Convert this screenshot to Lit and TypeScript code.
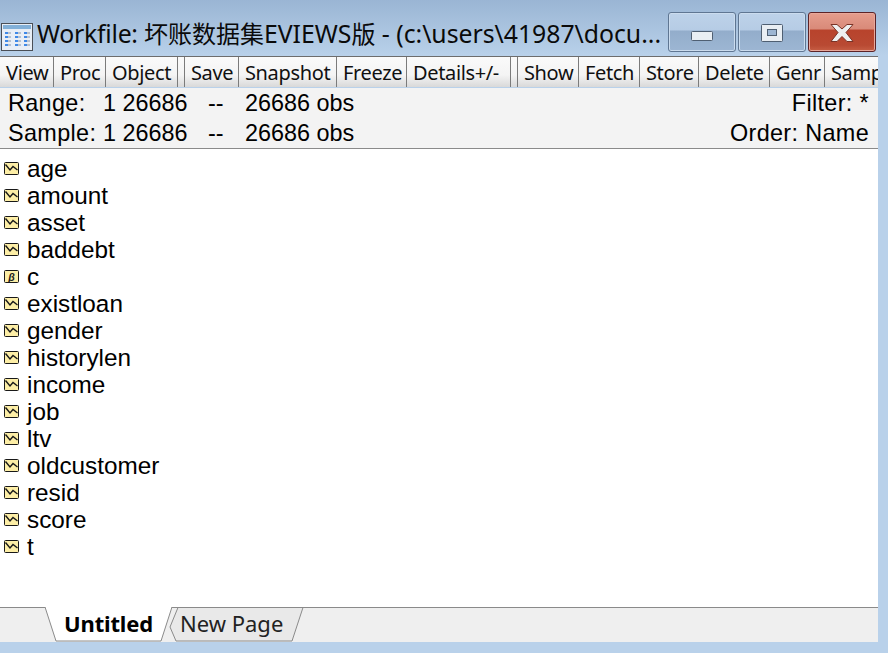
import { LitElement, html, css, svg } from "lit";
import { customElement } from "lit/decorators.js";

const TOOLS: (string | number)[][] = [
  ["View", 54], ["Proc", 52], ["Object", 72], ["", 7], ["Save", 54], ["Snapshot", 98], ["Freeze", 70],
  ["Details+/-", 104], ["", 7], ["Show", 61], ["Fetch", 61], ["Store", 59], ["Delete", 71], ["Genr", 55], ["Sample", 70],
];
const SERIES = ["age", "amount", "asset", "baddebt", "c", "existloan", "gender", "historylen", "income", "job", "ltv", "oldcustomer", "resid", "score", "t"];

@customElement("app-root")
export class AppRoot extends LitElement {
  static styles = css`
    :host { display: block; width: 888px; height: 653px; overflow: hidden; background: #b9d1ea; font-family: "Liberation Sans", Arial, sans-serif; color: #000; }
    .shell { height: 653px; display: flex; flex-direction: column; padding: 0 10px 11px 0; box-sizing: border-box; }
    .title { height: 56px; flex: none; margin-right: -10px; padding: 12px 12px 4px 1px; box-sizing: border-box; display: flex; align-items: flex-end; background: linear-gradient(#9ab5d4, #b9d1ea); }
    .app-icon { flex: none; width: 32px; height: 28px; margin-bottom: 1px; display: block; }
    .title-text { flex: 1; min-width: 0; margin-left: 4px; align-self: center; margin-top: 3px; font: 24.8px "Noto Sans", "Noto Sans CJK SC", sans-serif; letter-spacing: -0.02px; white-space: nowrap; line-height: 32px; color: #0a0a0a; }
    .lead { letter-spacing: -0.25px; }
    .cjk { font-size: 24px; letter-spacing: 0; }
    .controls { display: flex; gap: 2px; flex: none; }
    .ctl { width: 68px; height: 40px; box-sizing: border-box; border: 1px solid #5f7692; border-radius: 3px; box-shadow: inset 0 0 0 1px #cbdcee; background: linear-gradient(#bdd2e9 0, #b6cce5 45%, #93adcb 47%, #9db6d3 100%); display: flex; align-items: center; justify-content: center; }
    .ctl.close { border-color: #5c2327; box-shadow: inset 0 0 0 1px #e8a89b; background: linear-gradient(#e59d8d 0, #d98a79 42%, #b8432c 45%, #b94a33 85%, #c65f45 100%); }
    .ctl svg { display: block; margin-top: 2px; }
    .ctl .dash { margin-top: 7px; }
    .toolbar { flex: none; height: 31px; display: flex; overflow: hidden; border-top: 1px solid #6d6d6d; box-sizing: border-box; background: linear-gradient(#fafafa 0, #f4f4f4 60%, #d9d9d9 100%); }
    .tool { flex: none; box-sizing: border-box; height: 30px; border-right: 1px solid #7b7b7b; padding-left: 6px; font: 20px/31px "Noto Sans", sans-serif; letter-spacing: -0.36px; white-space: nowrap; overflow: hidden; color: #101010; }
    .tool.sep { background: linear-gradient(#fafafa 0, #f4f4f4 60%, #d9d9d9 100%); }
    .info { flex: none; height: 61px; padding: 0 9px 0 8px; box-sizing: border-box; background: #f3f3f3; border-bottom: 1px solid #8a8a8a; font-size: 23.4px; line-height: 31px; display: grid; grid-template-columns: 95px 105px 37px 1fr auto; grid-auto-rows: 30px; margin-top: 1px; }
    .label { letter-spacing: 0.35px; }
    .end { text-align: right; letter-spacing: 0.35px; }
    .list { flex: 1; min-height: 0; background: #fff; padding: 6px 0 0 4px; box-sizing: border-box; }
    .row { height: 27px; display: flex; align-items: center; gap: 8px; font-size: 24.3px; line-height: 27px; }
    .row svg { display: block; flex: none; width: 15px; height: 13px; margin-top: 0; }
    .tabs { flex: none; height: 35px; background: #efefef; border-top: 1px solid #8a8a8a; box-sizing: border-box; display: flex; padding-left: 45px; }
    .tab { position: relative; font: 22px/31px "Noto Sans", sans-serif; letter-spacing: -0.15px; }
    .tab svg { position: absolute; left: 0; top: -1px; display: block; }
    .tab span { position: relative; display: block; }
    .tab.active { width: 124px; font-weight: 700; }
    .tab.active span { padding-left: 19px; }
    .tab.other { width: 135px; margin-left: -3px; letter-spacing: 0; }
    .tab.other span { padding-left: 14px; color: #222; }
  `;

  private series() {
    return svg`<rect x=".5" y=".5" width="14" height="12" rx="1" fill="#fdeea6" stroke="#181818"/><path d="M1.500 2.500L6 8l3-3.500L13.500 8" fill="none" stroke="#181818" stroke-width="1.400"/>`;
  }

  private coef() {
    return svg`<rect x=".5" y=".5" width="14" height="12" rx="1" fill="#fdeea6" stroke="#181818"/><text x="7.500" y="10.500" font-size="10.500" font-style="italic" font-weight="700" text-anchor="middle" font-family="Liberation Sans" fill="#181818">β</text>`;
  }

  render() {
    return html`<div class="shell">
      <div class="title">
        <svg class="app-icon" viewBox="0 0 32 28">
          <rect x=".5" y=".5" width="31" height="27" fill="#e8eef6" stroke="#4a4f57"/>
          <rect x="2" y="2" width="28" height="4" fill="#82b0d8"/>
          ${[6, 16, 25].map((x) => [9, 13, 17, 21].map((y) => svg`<rect x=${x - 2} y=${y} width="3" height="2" fill="#3f89e8"/><rect x=${x + 1} y=${y} width="3" height="2" fill="#b7c1ce"/>`))}
        </svg>
        <div class="title-text"><span class="lead">Workfile: </span><span class="cjk">坏账数据集</span>EVIEWS<span class="cjk">版</span> - (c:\\users\\41987\\docu...</div>
        <div class="controls">
          <div class="ctl"><svg class="dash" width="22" height="10"><rect x=".5" y=".5" width="21" height="9" rx="1" fill="#e9eef3" stroke="#4f5f72"/></svg></div>
          <div class="ctl"><svg width="22" height="18"><rect x=".5" y=".5" width="21" height="17" rx="1" fill="#e9eef3" stroke="#4f5f72"/><rect x="6.500" y="5.500" width="9" height="6" fill="#9db6d3" stroke="#4f5f72"/></svg></div>
          <div class="ctl close"><svg width="24" height="18" viewBox="0 0 24 18"><path d="M1 .5h6l5 4.500 5-4.500h6l-7 8 7 9h-6l-5-5-5 5H1l7-9z" fill="#eef0f0" stroke="#7a3326"/></svg></div>
        </div>
      </div>
      <div class="toolbar">
        ${TOOLS.map(([t, w]) => html`<div class="tool ${t ? "" : "sep"}" style="width:${w}px">${t}</div>`)}
      </div>
      <div class="info">
        <div class="label">Range:</div><div>1 26686</div><div>--</div><div>26686 obs</div><div class="end">Filter: *</div>
        <div class="label">Sample:</div><div>1 26686</div><div>--</div><div>26686 obs</div><div class="end">Order: Name</div>
      </div>
      <div class="list">
        ${SERIES.map((s) => html`<div class="row">
          <svg viewBox="0 0 15 13">${s === "c" ? this.coef() : this.series()}</svg>
          <span>${s}</span>
        </div>`)}
      </div>
      <div class="tabs">
        <div class="tab active">
          <svg width="127" height="35" viewBox="0 0 127 35"><path d="M0 0l11 34h105l11-34" fill="#fff" stroke="#8a8a8a"/></svg>
          <span>Untitled</span>
        </div>
        <div class="tab other">
          <svg width="138" height="35" viewBox="0 0 138 35"><path d="M4 20L12 .5h125L126 34H10z" fill="#e9e9e9" stroke="#8a8a8a"/></svg>
          <span>New Page</span>
        </div>
      </div>
    </div>`;
  }
}
